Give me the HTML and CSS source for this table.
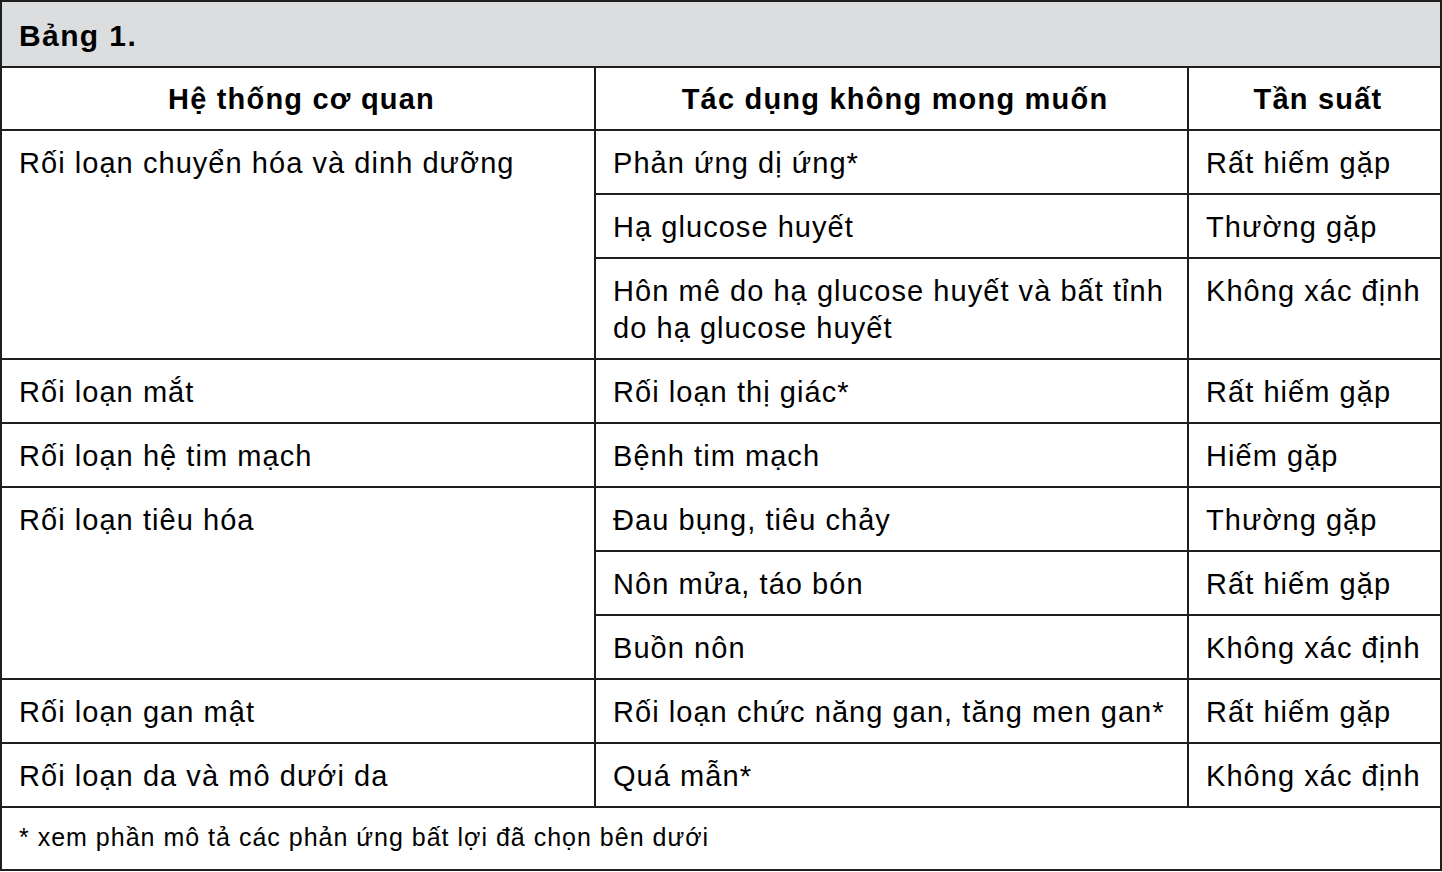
FILE: index.html
```html
<!DOCTYPE html>
<html lang="vi">
<head>
<meta charset="utf-8">
<title>Bảng 1</title>
<link rel="stylesheet" href="styles.css">
</head>
<body>
<table class="adr">
  <colgroup>
    <col class="c1">
    <col class="c2">
    <col class="c3">
  </colgroup>
  <thead>
    <tr><th colspan="3" class="caption">Bảng 1.</th></tr>
    <tr class="head">
      <th>Hệ thống cơ quan</th>
      <th>Tác dụng không mong muốn</th>
      <th>Tần suất</th>
    </tr>
  </thead>
  <tbody>
    <tr><td rowspan="3">Rối loạn chuyển hóa và dinh dưỡng</td><td>Phản ứng dị ứng*</td><td>Rất hiếm gặp</td></tr>
    <tr><td>Hạ glucose huyết</td><td>Thường gặp</td></tr>
    <tr><td>Hôn mê do hạ glucose huyết và bất tỉnh do hạ glucose huyết</td><td>Không xác định</td></tr>
    <tr><td>Rối loạn mắt</td><td>Rối loạn thị giác*</td><td>Rất hiếm gặp</td></tr>
    <tr><td>Rối loạn hệ tim mạch</td><td>Bệnh tim mạch</td><td>Hiếm gặp</td></tr>
    <tr><td rowspan="3">Rối loạn tiêu hóa</td><td>Đau bụng, tiêu chảy</td><td>Thường gặp</td></tr>
    <tr><td>Nôn mửa, táo bón</td><td>Rất hiếm gặp</td></tr>
    <tr><td>Buồn nôn</td><td>Không xác định</td></tr>
    <tr><td>Rối loạn gan mật</td><td>Rối loạn chức năng gan, tăng men gan*</td><td>Rất hiếm gặp</td></tr>
    <tr><td>Rối loạn da và mô dưới da</td><td>Quá mẫn*</td><td>Không xác định</td></tr>
  </tbody>
  <tfoot>
    <tr><td colspan="3" class="note">* xem phần mô tả các phản ứng bất lợi đã chọn bên dưới</td></tr>
  </tfoot>
</table>
</body>
</html>
```
FILE: styles.css
```css
html, body {
  margin: 0;
  padding: 0;
  background: #ffffff;
}
body {
  font-family: "Liberation Sans", Arial, sans-serif;
  color: #000000;
}
.adr {
  border-collapse: collapse;
  width: 1440px;
  table-layout: fixed;
}
.c1 { width: 594px; }
.c2 { width: 593px; }
.c3 { width: 253px; }
.adr th,
.adr td {
  border: 2px solid #1e1e1e;
  font-size: 29px;
  letter-spacing: 1.05px;
  line-height: 37px;
  padding: 14px 10px 11px 17px;
  vertical-align: top;
  text-align: left;
  font-weight: normal;
}
.adr .caption {
  background: #dcdddf;
  font-weight: bold;
  font-size: 30px;
  letter-spacing: 1.4px;
  height: 40px;
  padding-top: 15px;
  padding-bottom: 9px;
}
.adr .head th {
  font-weight: bold;
  letter-spacing: 1.2px;
  text-align: center;
  padding-top: 13px;
  padding-bottom: 11px;
}
.adr .note {
  font-size: 25px;
  letter-spacing: 1px;
  padding-top: 11px;
  padding-bottom: 13px;
}
```
